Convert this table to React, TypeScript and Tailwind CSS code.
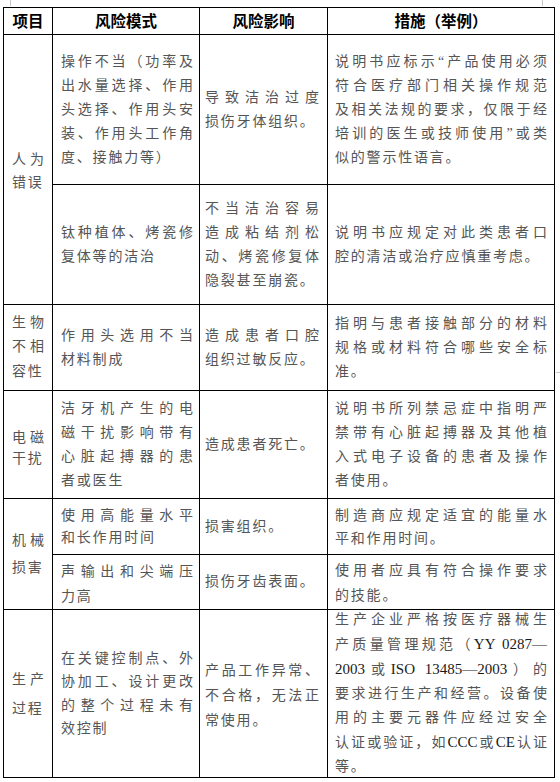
import React from "react";

type L = React.ReactNode;

const Lat = ({ children }: { children: React.ReactNode }) => (
  <span className="text-[#1a1a1a] text-[15px] tracking-normal">{children}</span>
);

function Cell({
  lines,
  pad = "pl-[8px] pr-[6px]",
  lh = "leading-[24px]",
  span = "",
}: {
  lines: L[];
  pad?: string;
  lh?: string;
  span?: string;
}) {
  return (
    <div className={`bg-white flex flex-col justify-center ${pad} ${lh} ${span}`}>
      {lines.map((l, i) =>
        i < lines.length - 1 ? (
          <div key={i} className="text-justify [text-align-last:justify] tracking-normal whitespace-nowrap">
            {l}
          </div>
        ) : (
          <div key={i} className="text-left tracking-[1.8px] whitespace-nowrap">
            {l}
          </div>
        )
      )}
    </div>
  );
}

function Head({ children }: { children: React.ReactNode }) {
  return (
    <div className="bg-white flex items-center justify-center text-black text-[15.5px] font-bold leading-none">
      {children}
    </div>
  );
}

const C1 = "pl-[8px] pr-[8px]";
const C2 = "pl-[8px] pr-[6px]";
const C3 = "pl-[5px] pr-[8px]";
const C4 = "pl-[7px] pr-[7px]";

export default function App() {
  return (
    <div
      className="relative w-[560px] h-[782px] bg-white overflow-hidden text-[14px] text-[#555]"
      style={{ fontFamily: '"Liberation Serif", "Noto Sans CJK SC", serif' }}
    >
      <div className="absolute left-[10px] top-0 w-px h-[6px] bg-[#c8c8c8]" />
      <div className="absolute left-[542px] top-0 w-px h-[6px] bg-[#c8c8c8]" />
      <div className="absolute left-[556px] top-[372px] w-[4px] h-px bg-[#c8c8c8]" />

      <div className="ml-[3px] mt-[7px] w-[552px] grid grid-cols-[48px_146px_127px_226px] grid-rows-[26px_149px_119px_85px_107px_55px_54px_167px] gap-px bg-black p-px">
        <div className="contents" style={{ fontFamily: '"Noto Sans CJK SC", sans-serif' }}>
          <Head>项目</Head>
          <Head>风险模式</Head>
          <Head>风险影响</Head>
          <Head>措施（举例）</Head>
        </div>

        {/* 人为错误 */}
        <Cell span="row-span-2" pad={C1} lh="leading-[23px] pt-[3px]" lines={["人为", "错误"]} />
        <Cell
          pad={C2}
          lines={["操作不当（功率及", "出水量选择、作用", "头选择、作用头安", "装、作用头工作角", "度、接触力等）"]}
        />
        <Cell pad={C3} lines={["导致洁治过度", "损伤牙体组织。"]} />
        <Cell
          pad={C4}
          lines={[
            "说明书应标示“产品使用必须",
            "符合医疗部门相关操作规范",
            "及相关法规的要求，仅限于经",
            "培训的医生或技师使用”或类",
            "似的警示性语言。",
          ]}
        />
        <Cell pad={C2} lines={["钛种植体、烤瓷修", "复体等的洁治"]} />
        <Cell pad={C3} lines={["不当洁治容易", "造成粘结剂松", "动、烤瓷修复体", "隐裂甚至崩瓷。"]} />
        <Cell pad={C4} lines={["说明书应规定对此类患者口", "腔的清洁或治疗应慎重考虑。"]} />

        {/* 生物不相容性 */}
        <Cell pad={C1} lh="leading-[24.5px]" lines={["生物", "不相", "容性"]} />
        <Cell pad={C2} lines={["作用头选用不当", "材料制成"]} />
        <Cell pad={C3} lines={["造成患者口腔", "组织过敏反应。"]} />
        <Cell pad={C4} lines={["指明与患者接触部分的材料", "规格或材料符合哪些安全标", "准。"]} />

        {/* 电磁干扰 */}
        <Cell pad={C1} lh="leading-[21px] pt-[6px]" lines={["电磁", "干扰"]} />
        <Cell pad={C2} lines={["洁牙机产生的电", "磁干扰影响带有", "心脏起搏器的患", "者或医生"]} />
        <Cell pad={C3} lines={["造成患者死亡。"]} />
        <Cell
          pad={C4}
          lines={["说明书所列禁忌症中指明严", "禁带有心脏起搏器及其他植", "入式电子设备的患者及操作", "者使用。"]}
        />

        {/* 机械损害 */}
        <Cell span="row-span-2" pad={C1} lh="leading-[27px]" lines={["机械", "损害"]} />
        <Cell pad={C2} lh="leading-[22px]" lines={["使用高能量水平", "和长作用时间"]} />
        <Cell pad={C3} lines={["损害组织。"]} />
        <Cell pad={C4} lh="leading-[23px]" lines={["制造商应规定适宜的能量水", "平和作用时间。"]} />
        <Cell pad={C2} lh="leading-[25px] pt-[4px]" lines={["声输出和尖端压", "力高"]} />
        <Cell pad={C3} lines={["损伤牙齿表面。"]} />
        <Cell pad={C4} lh="leading-[25px] pt-[2px]" lines={["使用者应具有符合操作要求", "的技能。"]} />

        {/* 生产过程 */}
        <Cell pad={C1} lh="leading-[29px]" lines={["生产", "过程"]} />
        <Cell pad={C2} lh="leading-[23.5px]" lines={["在关键控制点、外", "协加工、设计更改", "的整个过程未有", "效控制"]} />
        <Cell pad={C3} lh="leading-[25px] pt-[4px]" lines={["产品工作异常、", "不合格，无法正", "常使用。"]} />
        <Cell
          pad={C4}
          lh="leading-[24px]"
          lines={[
            "生产企业严格按医疗器械生",
            <>产质量管理规范（<Lat>YY 0287—</Lat></>,
            <><Lat>2003</Lat>或<Lat>ISO 13485—2003</Lat>）的</>,
            "要求进行生产和经营。设备使",
            "用的主要元器件应经过安全",
            <>认证或验证，如<Lat>CCC</Lat>或<Lat>CE</Lat>认证</>,
            "等。",
          ]}
        />
      </div>
    </div>
  );
}
